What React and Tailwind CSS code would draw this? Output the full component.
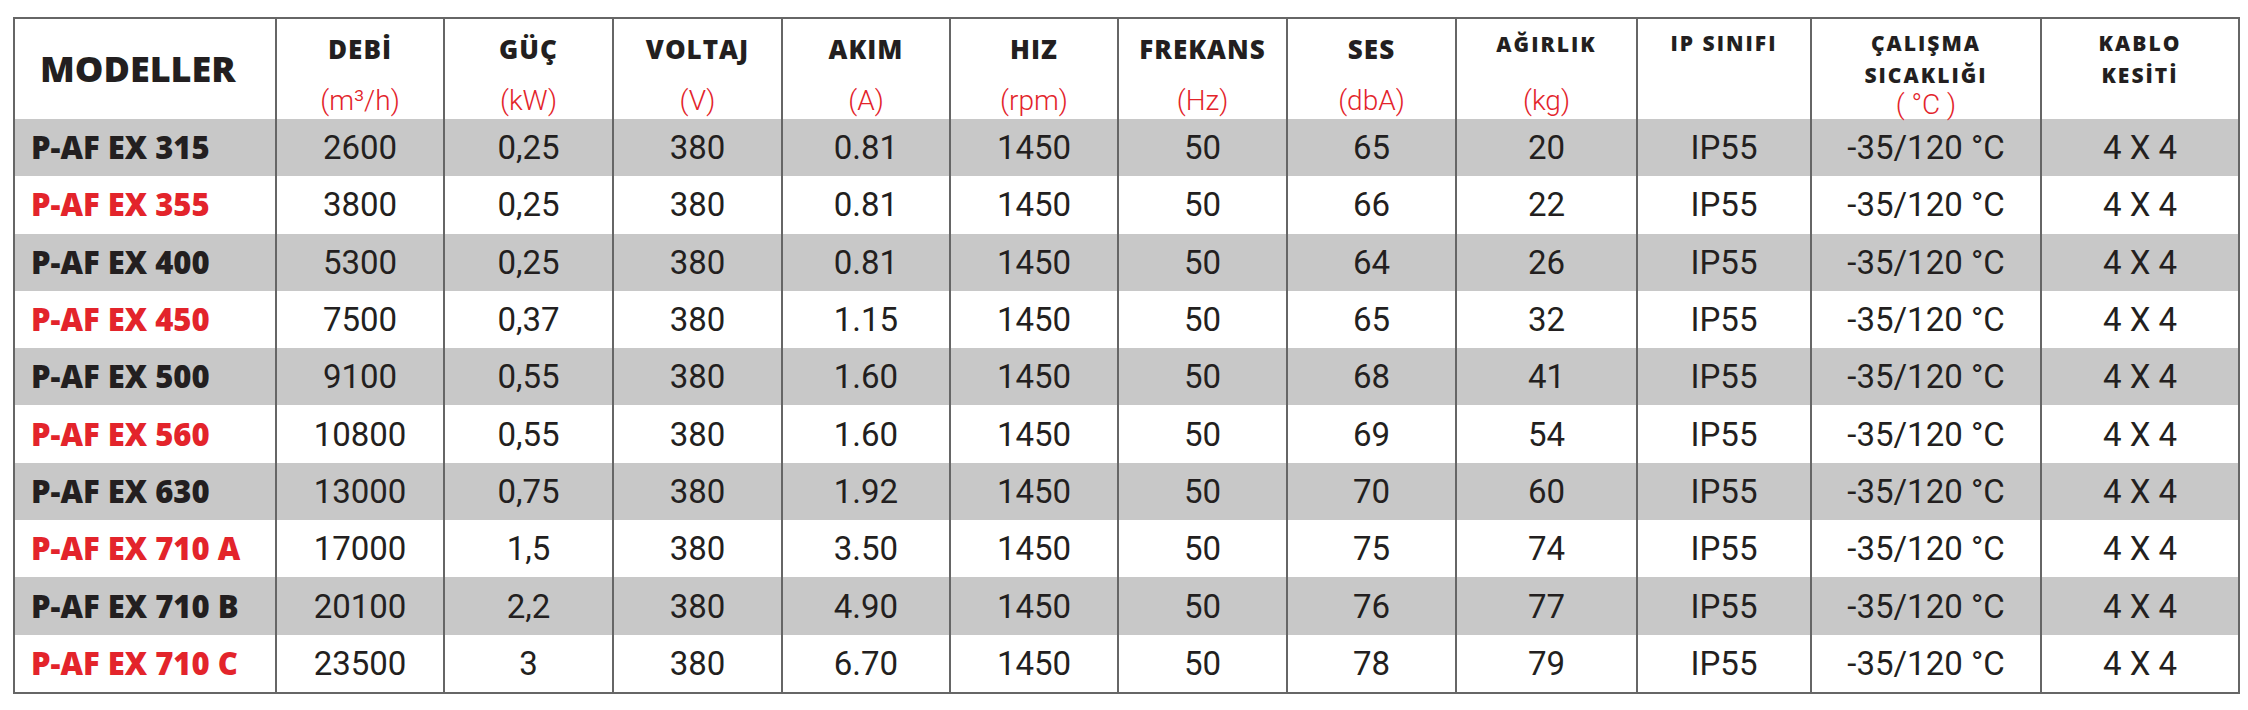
import React from 'react';

const RED = 'text-[#e3242b]';

const rows = [
  ['P-AF EX 315', '2600', '0,25', '380', '0.81', '1450', '50', '65', '20'],
  ['P-AF EX 355', '3800', '0,25', '380', '0.81', '1450', '50', '66', '22'],
  ['P-AF EX 400', '5300', '0,25', '380', '0.81', '1450', '50', '64', '26'],
  ['P-AF EX 450', '7500', '0,37', '380', '1.15', '1450', '50', '65', '32'],
  ['P-AF EX 500', '9100', '0,55', '380', '1.60', '1450', '50', '68', '41'],
  ['P-AF EX 560', '10800', '0,55', '380', '1.60', '1450', '50', '69', '54'],
  ['P-AF EX 630', '13000', '0,75', '380', '1.92', '1450', '50', '70', '60'],
  ['P-AF EX 710 A', '17000', '1,5', '380', '3.50', '1450', '50', '75', '74'],
  ['P-AF EX 710 B', '20100', '2,2', '380', '4.90', '1450', '50', '76', '77'],
  ['P-AF EX 710 C', '23500', '3', '380', '6.70', '1450', '50', '78', '79'],
];

const cols = 'grid grid-cols-[262px_168px_169px_169px_168px_168px_169px_169px_181px_174px_230px_196px]';
const line = 'border-r-2 border-[#666]';
const headFont = "font-['Open_Sans',sans-serif] font-extrabold text-[#231f20] leading-none";
const unitFont = `font-['Roboto',sans-serif] font-light text-[28px] leading-none ${RED}`;

// standard header: title + unit
const Head = ({ title, unit }) => (
  <div className={`${line} flex flex-col items-center pt-[17px]`}>
    <span className={`${headFont} text-[26px] tracking-[1px]`}>{title}</span>
    <span className={`${unitFont} mt-[25px]`}>{unit}</span>
  </div>
);

const SmallTitle = ({ children, className = '' }) => (
  <span className={`${headFont} text-[21px] tracking-[2px] ${className}`}>{children}</span>
);

export default function App() {
  return (
    <div className="w-[2248px] h-[710px] bg-white pt-[17px] pl-[13px]">
      <div className="w-[2227px] border-2 border-[#666]">
        {/* header */}
        <div className={`${cols} h-[100px]`}>
          <div className={`${line} flex items-center pl-[25px]`}>
            <span className={`${headFont} text-[36px]`}>MODELLER</span>
          </div>
          <Head title="DEBİ" unit="(m³/h)" />
          <Head title="GÜÇ" unit="(kW)" />
          <Head title="VOLTAJ" unit="(V)" />
          <Head title="AKIM" unit="(A)" />
          <Head title="HIZ" unit="(rpm)" />
          <Head title="FREKANS" unit="(Hz)" />
          <Head title="SES" unit="(dbA)" />
          <div className={`${line} flex flex-col items-center pt-[15px]`}>
            <SmallTitle>AĞIRLIK</SmallTitle>
            <span className={`${unitFont} mt-[32px]`}>(kg)</span>
          </div>
          <div className={`${line} flex flex-col items-center pt-[14px]`}>
            <SmallTitle>IP SINIFI</SmallTitle>
          </div>
          <div className={`${line} flex flex-col items-center pt-[14px]`}>
            <SmallTitle>ÇALIŞMA</SmallTitle>
            <SmallTitle className="mt-[11px]">SICAKLIĞI</SmallTitle>
            <span className={`${unitFont} mt-[5px]`}>( °C )</span>
          </div>
          <div className="flex flex-col items-center pt-[14px]">
            <SmallTitle>KABLO</SmallTitle>
            <SmallTitle className="mt-[11px]">KESİTİ</SmallTitle>
          </div>
        </div>

        {/* body */}
        {rows.map((r, i) => {
          const cells = [...r.slice(1), 'IP55', '-35/120 °C', '4 X 4'];
          return (
            <div key={r[0]} className={`${cols} h-[57.3px] ${i % 2 === 0 ? 'bg-[#c8c8c8]' : 'bg-white'}`}>
              <div className={`${line} flex items-center pl-[16px]`}>
                <span className={`font-['Open_Sans',sans-serif] font-extrabold text-[31px] leading-none ${i % 2 === 0 ? 'text-[#231f20]' : RED}`}>
                  {r[0]}
                </span>
              </div>
              {cells.map((c, j) => (
                <div
                  key={j}
                  className={`${j < cells.length - 1 ? line : ''} flex items-center justify-center font-['Roboto',sans-serif] text-[33px] leading-none text-[#231f20]`}
                >
                  {c}
                </div>
              ))}
            </div>
          );
        })}
      </div>
    </div>
  );
}
